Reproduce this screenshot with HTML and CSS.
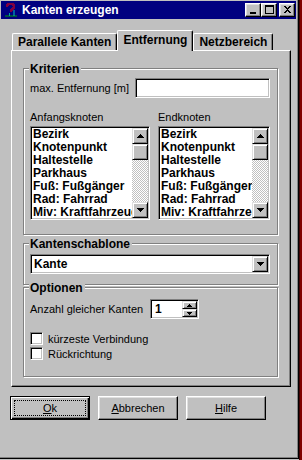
FILE: index.html
```html
<!DOCTYPE html>
<html lang="de">
<head>
    <meta charset="UTF-8">
    <title>Kanten erzeugen</title>
    <link rel="stylesheet" href="styles.css">
</head>
<body>
    <div class="screen">
        <div class="window">
            <!-- Title bar -->
            <div class="titlebar">
                <svg class="app-icon" width="14" height="14" viewBox="0 0 14 14">
                    <path d="M3 4V2h1V1h5v1h1v3H9v1H8v1H7v2" fill="none" stroke="#800040" stroke-width="2"/>
                    <path d="M1 13h12" stroke="#00a000" stroke-width="1"/>
                    <path d="M5.5 10v3" stroke="#00a0a0" stroke-width="1"/>
                    <path d="M10 7v6" stroke="#00c0c0" stroke-width="1"/>
                </svg>
                <span class="title">Kanten erzeugen</span>
                <div class="caption-btns">
                    <span class="cap-btn"><svg width="14" height="12"><rect x="4" y="8" width="6" height="2"/></svg></span>
                    <span class="cap-btn"><svg width="14" height="12"><path d="M3 1h9v9H3z M4 3v6h7V3z" fill-rule="evenodd"/></svg></span>
                    <span class="cap-btn cap-close"><svg width="14" height="12"><path d="M4 2h2v1h1v1h1V3h1V2h2v1h-1v1H9v1H8v1h1v1h1v1h1v1H9V8H8V7H7v1H6v1H4V8h1V7h1V6h1V5H6V4H5V3H4z"/></svg></span>
                </div>
            </div>

            <div class="content">
                <!-- Tabs -->
                <div class="tabs">
                    <div class="tab">Parallele Kanten</div>
                    <div class="tab active">Entfernung</div>
                    <div class="tab">Netzbereich</div>
                </div>

                <div class="page">
                    <fieldset class="group group-criteria">
                        <legend>Kriterien</legend>
                        <div class="field-row">
                            <span>max. Entfernung [m]</span>
                            <div class="field field-distance"></div>
                        </div>
                        <div class="lists">
                            <div class="list-col list-start">
                                <div class="col-label">Anfangsknoten</div>
                                <div class="listbox">
                                    <ul class="items">
                                        <li>Bezirk</li>
                                        <li>Knotenpunkt</li>
                                        <li>Haltestelle</li>
                                        <li>Parkhaus</li>
                                        <li>Fuß: Fußgänger</li>
                                        <li>Rad: Fahrrad</li>
                                        <li>Miv: Kraftfahrzeug</li>
                                    </ul>
                                    <div class="scrollbar">
                                        <span class="sb-btn"><svg width="7" height="4"><path d="M3 0h1v1h1v1h1v1h1v1H0V3h1V2h1V1h1z"/></svg></span>
                                        <span class="sb-thumb"></span>
                                        <span class="sb-track"></span>
                                        <span class="sb-btn"><svg width="7" height="4"><path d="M0 0h7v1H6v1H5v1H4v1H3V3H2V2H1V1H0z"/></svg></span>
                                    </div>
                                </div>
                            </div>
                            <div class="list-col list-end">
                                <div class="col-label">Endknoten</div>
                                <div class="listbox">
                                    <ul class="items">
                                        <li>Bezirk</li>
                                        <li>Knotenpunkt</li>
                                        <li>Haltestelle</li>
                                        <li>Parkhaus</li>
                                        <li>Fuß: Fußgänger</li>
                                        <li>Rad: Fahrrad</li>
                                        <li>Miv: Kraftfahrzeug</li>
                                    </ul>
                                    <div class="scrollbar">
                                        <span class="sb-btn"><svg width="7" height="4"><path d="M3 0h1v1h1v1h1v1h1v1H0V3h1V2h1V1h1z"/></svg></span>
                                        <span class="sb-thumb"></span>
                                        <span class="sb-track"></span>
                                        <span class="sb-btn"><svg width="7" height="4"><path d="M0 0h7v1H6v1H5v1H4v1H3V3H2V2H1V1H0z"/></svg></span>
                                    </div>
                                </div>
                            </div>
                        </div>
                    </fieldset>

                    <fieldset class="group group-template">
                        <legend>Kantenschablone</legend>
                        <div class="field combo">
                            <span class="combo-text">Kante</span>
                            <span class="sb-btn"><svg width="7" height="4"><path d="M0 0h7v1H6v1H5v1H4v1H3V3H2V2H1V1H0z"/></svg></span>
                        </div>
                    </fieldset>

                    <fieldset class="group group-options">
                        <legend>Optionen</legend>
                        <div class="spin-row">
                            <span class="spin-label">Anzahl gleicher Kanten</span>
                            <div class="field spin">
                                <span class="spin-value">1</span>
                                <span class="spin-btns">
                                    <span class="spin-btn"><svg width="5" height="3"><path d="M2 0h1v1h1v1h1v1H0V2h1V1h1z"/></svg></span>
                                    <span class="spin-btn"><svg width="5" height="3"><path d="M0 0h5v1H4v1H3v1H2V2H1V1H0z"/></svg></span>
                                </span>
                            </div>
                        </div>
                        <div class="check-row"><span class="checkbox"></span>kürzeste Verbindung</div>
                        <div class="check-row"><span class="checkbox"></span>Rückrichtung</div>
                    </fieldset>
                </div>

                <!-- Dialog buttons -->
                <div class="actions">
                    <div class="button default"><span class="focus"><u>O</u>k</span></div>
                    <div class="button"><span><u>A</u>bbrechen</span></div>
                    <div class="button"><span><u>H</u>ilfe</span></div>
                </div>
            </div>
        </div>
        <div class="edge"></div>
    </div>
</body>
</html>
```

FILE: styles.css
```css
/* Win95 style dialog */
* { box-sizing: border-box; }
body {
    margin: 0;
    font-family: "Liberation Sans", Arial, sans-serif;
    font-size: 11px;
    color: #000;
    background: #c0c0c0;
}

.screen { display: flex; width: 302px; height: 460px; }

.window {
    width: 299px;
    height: 459px;
    padding: 1px 2px 0 1px;
    background: #c0c0c0;
    border-right: 1px solid #000;
    border-bottom: 1px solid #000;
    box-shadow: inset -1px -1px #808080;
    display: flex;
    flex-direction: column;
}

.edge { width: 3px; background: #800000; box-shadow: inset 1px 0 #400000; }

/* Title bar */
.titlebar {
    height: 18px;
    background: #000080;
    color: #fff;
    display: flex;
    align-items: center;
    padding: 0 1px 0 3px;
}
.app-icon { display: block; margin-right: 4px; }
.title { font-weight: bold; font-size: 12px; flex: 1; }
.caption-btns { display: flex; }
.cap-btn {
    width: 16px;
    height: 14px;
    background: #c0c0c0;
    border: 1px solid;
    border-color: #fff #000 #000 #fff;
    box-shadow: inset -1px -1px #808080, inset 1px 1px #dfdfdf;
}
.cap-btn svg { display: block; }
.cap-close { margin-left: 2px; }

/* Tabs */
.content {
    flex: 1;
    padding: 11px 5px 0 10px;
}
.tabs {
    display: flex;
    align-items: flex-end;
    height: 20px;
    padding-left: 1px;
}
.tab {
    height: 17px;
    padding: 0 5px;
    border: 1px solid;
    border-color: #fff #000 transparent #fff;
    border-bottom: none;
    border-radius: 2px 2px 0 0;
    box-shadow: inset -1px 0 #808080;
    font-size: 12px;
    font-weight: bold;
    line-height: 16px;
    background: #c0c0c0;
}
.tab.active {
    height: 21px;
    margin-bottom: -1px;
    line-height: 18px;
    position: relative;
}

.page {
    border: 1px solid;
    border-color: #fff #000 #000 #fff;
    box-shadow: inset -1px -1px #808080;
    padding: 13px 12px 9px 11px;
}

/* Group boxes */
.group {
    margin: 0;
    min-width: 0;
    border: 1px solid #808080;
    box-shadow: inset 1px 1px #fff, 1px 1px #fff;
    padding: 6px 7px 14px 6px;
}
.group legend {
    font-size: 12px;
    font-weight: bold;
    line-height: 6px;
    padding: 2px 2px 0 1px;
    margin-left: -1px;
    background: #c0c0c0;
}
.group-template { margin-top: 4px; padding: 7px 7px 10px 6px; }
.group-options { margin-top: -2px; padding: 8px 7px 15px 6px; }

/* Sunken fields */
.field {
    height: 20px;
    background: #fff;
    border: 1px solid;
    border-color: #808080 #fff #fff #808080;
    box-shadow: inset 1px 1px #000, inset -1px -1px #c0c0c0;
    padding: 1px;
}

.field-row {
    display: flex;
    align-items: center;
    justify-content: space-between;
}
.field-distance { width: 135px; }

.lists { display: flex; gap: 8px; margin-top: 13px; }
.list-start { width: 120px; }
.list-end { width: 112px; }
.col-label { line-height: 13px; margin-bottom: 2px; }

.listbox {
    display: flex;
    height: 94px;
    background: #fff;
    border: 1px solid;
    border-color: #808080 #fff #fff #808080;
    box-shadow: inset 1px 1px #000, inset -1px -1px #c0c0c0;
    padding: 1px;
}
.items {
    flex: 1;
    min-width: 0;
    margin: 0;
    padding: 0 0 0 1px;
    list-style: none;
    overflow: hidden;
    white-space: nowrap;
    font-size: 12px;
    font-weight: bold;
    line-height: 13px;
}

/* Scroll bar parts */
.scrollbar { width: 16px; display: flex; flex-direction: column; }
.sb-btn, .sb-thumb, .spin-btn {
    background: #c0c0c0;
    border: 1px solid;
    border-color: #dfdfdf #000 #000 #dfdfdf;
    box-shadow: inset 1px 1px #fff, inset -1px -1px #808080;
}
.sb-btn {
    width: 16px;
    height: 16px;
    display: flex;
    align-items: center;
    justify-content: center;
}
.sb-btn svg, .spin-btn svg { display: block; }
.sb-thumb { height: 16px; }
.sb-track {
    flex: 1;
    background: repeating-conic-gradient(#fff 0 25%, #c0c0c0 0 50%) 0 0 / 2px 2px;
}

/* Combo box */
.combo { display: flex; align-items: center; height: 20px; }
.combo-text {
    flex: 1;
    font-size: 12px;
    font-weight: bold;
    padding-left: 2px;
}

/* Spin edit */
.spin-row { display: flex; align-items: center; height: 20px; }
.spin-label { width: 120px; }
.spin { width: 49px; display: flex; }
.spin-value {
    flex: 1;
    font-size: 12px;
    font-weight: bold;
    line-height: 16px;
    padding-left: 3px;
}
.spin-btns { display: flex; flex-direction: column; width: 15px; }
.spin-btn {
    flex: 1;
    display: flex;
    align-items: center;
    justify-content: center;
}

/* Check boxes */
.check-row {
    display: flex;
    align-items: center;
    gap: 5px;
    height: 15px;
}
.spin-row + .check-row { margin-top: 12px; }
.checkbox {
    width: 13px;
    height: 13px;
    background: #fff;
    border: 1px solid;
    border-color: #808080 #fff #fff #808080;
    box-shadow: inset 1px 1px #000, inset -1px -1px #c0c0c0;
}

/* Dialog buttons */
.actions {
    display: flex;
    gap: 8px;
    margin: 9px 0 0 -1px;
}
.button {
    width: 80px;
    height: 24px;
    display: flex;
    align-items: center;
    justify-content: center;
    background: #c0c0c0;
    border: 1px solid;
    border-color: #fff #000 #000 #fff;
    box-shadow: inset -1px -1px #808080, inset 1px 1px #dfdfdf;
}
.button.default {
    border-color: #000;
    box-shadow: inset 1px 1px #fff, inset -1px -1px #000, inset -2px -2px #808080;
    padding: 3px;
}
.focus {
    flex: 1;
    align-self: stretch;
    display: flex;
    align-items: center;
    justify-content: center;
    border: 1px dotted #000;
}
```
